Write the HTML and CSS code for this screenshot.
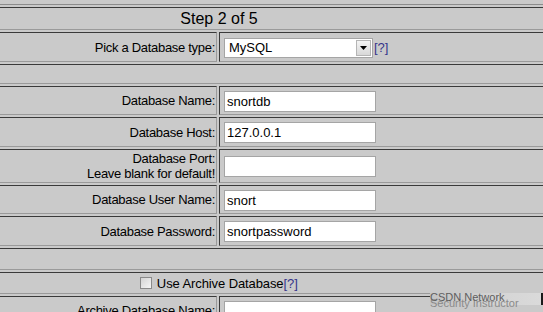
FILE: index.html
```html
<!DOCTYPE html>
<html lang="en">
<head>
  <meta charset="utf-8">
  <title>Step 2 of 5</title>
  <link rel="stylesheet" href="styles.css">
</head>
<body>
  <div class="page">
    <table class="setup">
      <tr class="row row--head">
        <td class="setup__head" colspan="2">Step 2 of 5</td>
      </tr>
      <tr class="row row--30">
        <td class="setup__label">Pick a Database type:</td>
        <td class="setup__field"><span class="select"><span class="select__value">MySQL</span><span class="select__arrow"><svg width="7" height="4" viewBox="0 0 7 4"><path d="M0 0h7L3.5 4z" fill="#000"/></svg></span></span><a class="help" href="#">[?]</a></td>
      </tr>
      <tr class="row row--gap">
        <td colspan="2"></td>
      </tr>
      <tr class="row">
        <td class="setup__label">Database Name:</td>
        <td class="setup__field"><input class="text" type="text" value="snortdb"></td>
      </tr>
      <tr class="row row--30">
        <td class="setup__label">Database Host:</td>
        <td class="setup__field"><input class="text" type="text" value="127.0.0.1"></td>
      </tr>
      <tr class="row row--port">
        <td class="setup__label">Database Port:<br>Leave blank for default!</td>
        <td class="setup__field"><input class="text" type="text" value=""></td>
      </tr>
      <tr class="row">
        <td class="setup__label">Database User Name:</td>
        <td class="setup__field"><input class="text" type="text" value="snort"></td>
      </tr>
      <tr class="row row--30">
        <td class="setup__label">Database Password:</td>
        <td class="setup__field"><input class="text" type="text" value="snortpassword"></td>
      </tr>
      <tr class="row row--gap2">
        <td colspan="2"></td>
      </tr>
      <tr class="row row--check">
        <td class="setup__check" colspan="2"><span class="checkbox"></span> Use Archive Database<a class="help" href="#">[?]</a></td>
      </tr>
      <tr class="row">
        <td class="setup__label">Archive Database Name:</td>
        <td class="setup__field"><input class="text" type="text" value=""></td>
      </tr>
    </table>
    <div class="watermark">
      <span class="watermark__bottom">Security Instructor</span>
      <span class="watermark__top">CSDN Network</span>
    </div>
  </div>
</body>
</html>
```

FILE: styles.css
```css
* {
  box-sizing: border-box;
}

html, body {
  margin: 0;
  padding: 0;
  background-color: #CACACA;
  overflow: hidden;
}

body {
  font-family: "Liberation Sans", Arial, sans-serif;
  font-size: 13px;
  color: #000000;
}

.page {
  position: relative;
  width: 543px;
  height: 312px;
  overflow: hidden;
  padding-top: 4px;
}

.setup {
  width: 565px;
  margin-left: -11px;
  border-top: 1px solid #8C8C8C;
  border-spacing: 2px;
}

.setup td {
  height: 29px;
  border-top: 1px solid #3A3A3A;
  border-left: 1px solid #3A3A3A;
  border-bottom: 1px solid #9A9A9A;
  border-right: 1px solid #9A9A9A;
  padding: 0;
}

.row--head td {
  height: 23px;
}

.row--30 td {
  height: 30px;
}

.row--gap td {
  height: 20px;
}

.row--port td {
  height: 34px;
}

.row--gap2 td,
.row--check td {
  height: 22px;
}

.setup__head {
  font-size: 16px;
  text-align: center;
  padding-right: 105px !important;
}

.setup__label {
  width: 226px;
  text-align: right;
  padding-right: 1px !important;
  line-height: 15px;
  letter-spacing: -0.3px;
}

.setup__field {
  padding: 1px 4px 0 4px !important;
}

.setup__check {
  text-align: center;
  padding-right: 105px !important;
  letter-spacing: -0.1px;
}

.text {
  display: block;
  width: 152px;
  height: 21px;
  margin: 0;
  padding: 1px 2px;
  border: 1px solid #A5A5A5;
  background: #FFFFFF;
  font-family: inherit;
  font-size: 13px;
  color: #000000;
  outline: none;
}

.select {
  display: inline-flex;
  align-items: center;
  vertical-align: middle;
  width: 149px;
  height: 20px;
  border: 1px solid #A5A5A5;
  background: #FFFFFF;
}

.select__value {
  flex: 1;
  padding-left: 4px;
}

.select__arrow {
  display: flex;
  align-items: center;
  justify-content: center;
  width: 15px;
  height: 16px;
  margin-right: 1px;
  border: 1px solid #B5B5B5;
  background: linear-gradient(#F4F4F4, #D8D8D8);
}

.help {
  color: #35358A;
  text-decoration: none;
  margin-left: 1px;
  vertical-align: middle;
}

.setup__check .help {
  margin-left: 0;
  vertical-align: baseline;
}

.checkbox {
  display: inline-block;
  width: 12px;
  height: 12px;
  margin-right: 1px;
  border: 1px solid #8A8A8A;
  background: linear-gradient(135deg, #D4D4D4, #F6F6F6);
  vertical-align: -1px;
}

.watermark {
  position: absolute;
  left: 430px;
  top: 293px;
  width: 113px;
  height: 12px;
  background: linear-gradient(90deg, #C4C4C4, #D6D6D6 70%, #DADADA);
  border-right: 2px solid #1A1A1A;
  font-size: 11px;
  color: #6A6A6A;
  line-height: 11px;
}

.watermark__top,
.watermark__bottom {
  position: absolute;
  left: 0;
  white-space: nowrap;
}

.watermark__top {
  top: -1px;
  color: #5E5E5E;
}

.watermark__bottom {
  top: 5px;
  color: #8A8A8A;
}
```
